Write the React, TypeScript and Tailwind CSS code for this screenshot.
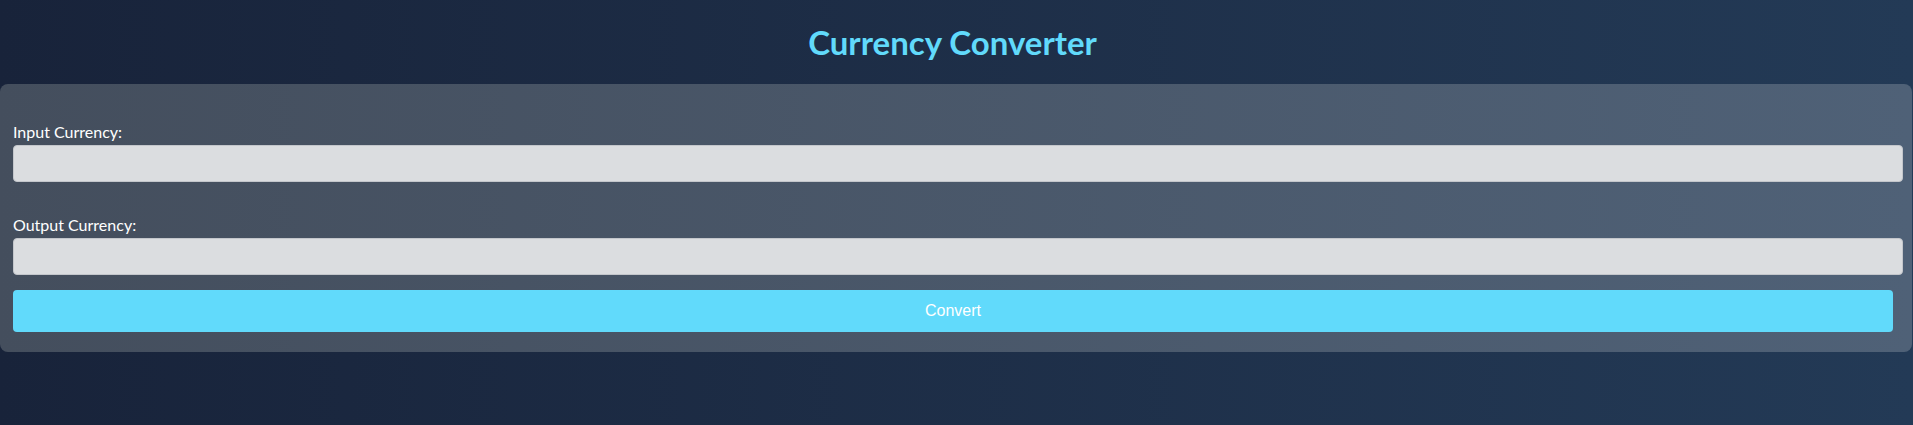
import React from "react";

const Field: React.FC<{ label: string; className?: string }> = ({ label, className }) => {
  return (
    <div className={className}>
      <label className="block text-[16px] leading-[22px] text-white mb-[2px]">{label}</label>
      <input
        type="text"
        className="block w-full h-[37px] rounded-[4px] bg-[#dbdde0] border border-[#c3c6cb] outline-none"
      />
    </div>
  );
};

export default function App() {
  return (
    <div
      className="min-h-[425px] w-full bg-gradient-to-r from-[#18233a] to-[#233a56] font-['Lato','Noto_Sans',sans-serif]"
    >
      <h1 className="text-center text-[33px] leading-[40px] font-bold text-[#61dafb] pt-[22px] pr-[8px] h-[84px]">
        Currency Converter
      </h1>

      <div className="w-[1912px] rounded-lg bg-gradient-to-r from-[#444e5d] to-[#4f6177] pt-[37px] pb-[20px] pl-[13px] pr-[9px]">
        <Field label="Input Currency:" />
        <Field label="Output Currency:" className="mt-[32px]" />
        <button className="mt-[15px] w-[1880px] h-[42px] rounded-[4px] bg-[#61dafb] text-white text-[16px] font-['Liberation_Sans',Arial,sans-serif]">
          Convert
        </button>
      </div>
    </div>
  );
}
